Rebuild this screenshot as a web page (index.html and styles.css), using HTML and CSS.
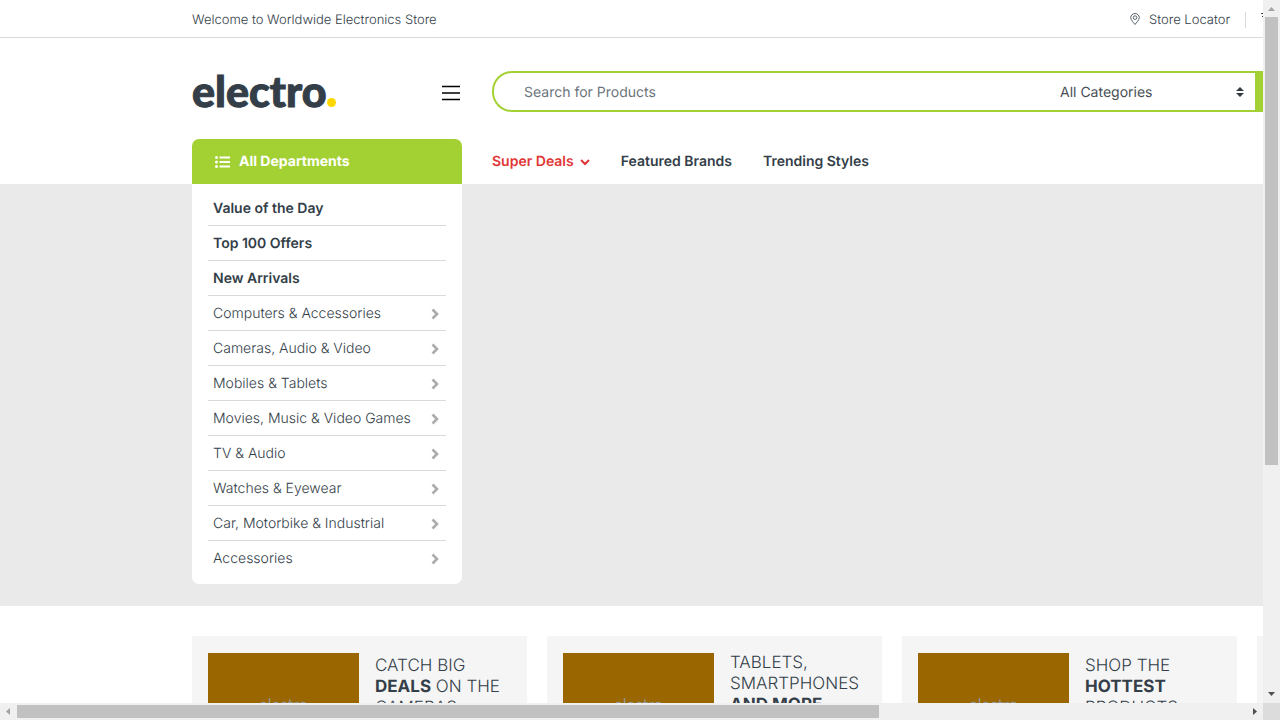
FILE: index.html
```html
<!DOCTYPE html>
<html lang="en">
<head>
<meta charset="utf-8">
<title>Electro</title>
<link rel="stylesheet" href="styles.css">
</head>
<body>
<svg class="defs" aria-hidden="true">
  <symbol id="chevron" viewBox="0 0 8 12"><path d="M1.500 1.500 6 6l-4.500 4.500" fill="none" stroke="currentColor" stroke-width="2.600"/></symbol>
</svg>
<div class="window">
  <div class="view">
    <div class="page">
      <div class="topbar">
        <div class="wrap topbar-row">
          <a class="top-link" href="#">Welcome to Worldwide Electronics Store</a>
          <nav class="top-nav" aria-label="Account">
            <a class="top-link locator" href="#">
              <svg class="pin" width="12" height="12" viewBox="0 0 12 12" fill="none" stroke="currentColor" stroke-width=".8" aria-hidden="true"><path d="M6 11.500C4.500 9.300 1.700 7 1.700 4.600a4.300 4.100 0 0 1 8.600 0C10.300 7 7.500 9.300 6 11.500z"/><circle cx="6" cy="4.600" r="1.800"/></svg>
              Store Locator</a>
            <span class="divider"></span>
            <a class="top-link" href="#" aria-label="Track your order">
              <svg width="16" height="12" viewBox="0 0 16 12" fill="none" stroke="currentColor" aria-hidden="true"><path d="M0 1.500h10v7H6M1 4.500h3M2 6.500h2M2 8.500h1M10 3.500h3l2 3v2h-2"/><circle cx="4.500" cy="9.500" r="1.500"/><circle cx="11.500" cy="9.500" r="1.500"/></svg>
            </a>
          </nav>
        </div>
      </div>
      <header class="wrap columns header">
        <div class="brand">
          <a class="logo" href="#">electro<span class="logo-dot"></span></a>
          <button class="burger" type="button" aria-label="Menu"><svg width="18" height="16" viewBox="0 0 18 16" aria-hidden="true"><path d="M0 1.500h18M0 8h18M0 14.500h18" stroke="#000" stroke-width="1.600"/></svg></button>
        </div>
        <form class="search">
          <input class="search-input" type="text" placeholder="Search for Products" aria-label="Search for Products">
          <div class="category">
            <select class="category-select" aria-label="Category"><option>All Categories</option></select>
            <svg class="category-arrows" width="8" height="10" viewBox="0 0 8 10" aria-hidden="true"><path d="M4 0l4 4H0zM4 10L0 6h8z" fill="#343a40"/></svg>
          </div>
          <button class="search-button" type="submit" aria-label="Search"></button>
        </form>
      </header>
      <div class="wrap columns navigation">
        <button class="departments" type="button">
          <svg class="list-icon" width="15" height="12" viewBox="0 0 15 12" fill="#fff" aria-hidden="true"><circle cx="1.500" cy="1.500" r="1.500"/><circle cx="1.500" cy="6" r="1.500"/><circle cx="1.500" cy="10.500" r="1.500"/><path d="M4.500.5H15v2H4.500zM4.500 5H15v2H4.500zM4.500 9.500H15v2H4.500z"/></svg>
          All Departments</button>
        <nav class="main-nav" aria-label="Main">
          <a class="nav-link hot" href="#">Super Deals
            <svg class="caret" width="10" height="7" viewBox="0 0 10 7" aria-hidden="true"><path d="M1 1l4 4 4-4" fill="none" stroke="currentColor" stroke-width="2"/></svg></a>
          <a class="nav-link" href="#">Featured Brands</a>
          <a class="nav-link" href="#">Trending Styles</a>
        </nav>
      </div>
      <section class="banner">
        <div class="wrap">
          <ul class="menu">
            <li><a class="menu-link strong" href="#">Value of the Day</a></li>
            <li><a class="menu-link strong" href="#">Top 100 Offers</a></li>
            <li><a class="menu-link strong" href="#">New Arrivals</a></li>
            <li><a class="menu-link" href="#">Computers &amp; Accessories<svg class="arrow"><use href="#chevron"/></svg></a></li>
            <li><a class="menu-link" href="#">Cameras, Audio &amp; Video<svg class="arrow"><use href="#chevron"/></svg></a></li>
            <li><a class="menu-link" href="#">Mobiles &amp; Tablets<svg class="arrow"><use href="#chevron"/></svg></a></li>
            <li><a class="menu-link" href="#">Movies, Music &amp; Video Games<svg class="arrow"><use href="#chevron"/></svg></a></li>
            <li><a class="menu-link" href="#">TV &amp; Audio<svg class="arrow"><use href="#chevron"/></svg></a></li>
            <li><a class="menu-link" href="#">Watches &amp; Eyewear<svg class="arrow"><use href="#chevron"/></svg></a></li>
            <li><a class="menu-link" href="#">Car, Motorbike &amp; Industrial<svg class="arrow"><use href="#chevron"/></svg></a></li>
            <li><a class="menu-link" href="#">Accessories<svg class="arrow"><use href="#chevron"/></svg></a></li>
          </ul>
        </div>
      </section>
      <section class="wrap cards">
        <a class="card" href="#"><div class="picture">electro</div><div class="card-text">CATCH BIG <b>DEALS</b> ON THE CAMERAS<div class="action"></div></div></a>
        <a class="card" href="#"><div class="picture">electro</div><div class="card-text">TABLETS, SMARTPHONES <b>AND MORE</b><div class="action tall"></div></div></a>
        <a class="card" href="#"><div class="picture">electro</div><div class="card-text">SHOP THE <b>HOTTEST</b> PRODUCTS<div class="action"></div></div></a>
        <div class="card"></div>
      </section>
    </div>
  </div>
  <div class="bar vertical" aria-hidden="true">
    <svg class="bar-end" viewBox="0 0 17 17"><path d="M5 11l3.500-4 3.500 4z" fill="#a3a3a3"/></svg>
    <div class="track"><div class="thumb"></div></div>
    <svg class="bar-end" viewBox="0 0 17 17"><path d="M5 6l3.500 4L12 6z" fill="#505050"/></svg>
  </div>
  <div class="bar" aria-hidden="true">
    <svg class="bar-end" viewBox="0 0 17 17"><path d="M10 5L6 8.500l4 3.500z" fill="#a3a3a3"/></svg>
    <div class="track"><div class="thumb"></div></div>
    <svg class="bar-end" viewBox="0 0 17 17"><path d="M7 5l4 3.500L7 12z" fill="#505050"/></svg>
  </div>
  <div class="corner"></div>
</div>
</body>
</html>
```
FILE: styles.css
```css
* { box-sizing: border-box; }
body {
  margin: 0;
  font-family: Inter, "Liberation Sans", sans-serif;
  font-size: 14px;
  color: #333e48;
  background: #fff;
  text-rendering: geometricPrecision;
}
a { color: inherit; text-decoration: none; }
button, input, select { font: inherit; color: inherit; border: 0; padding: 0; background: none; text-rendering: inherit; }
.defs { display: none; }

.window {
  display: grid;
  grid-template: minmax(0, 1fr) 17px / minmax(0, 1fr) 17px;
  height: 100vh;
}
.view { overflow: hidden; }
.page { min-width: 1800px; }
.wrap { padding: 0 192px; }
.columns { display: grid; grid-template-columns: 270px 1fr; gap: 30px; }

.topbar { border-bottom: 1px solid #dadada; font-size: 13px; font-weight: 300; }
.topbar-row { display: flex; justify-content: space-between; align-items: center; height: 37px; padding-top: 2px; }
.top-nav { display: flex; align-items: center; gap: 15px; flex: 0 0 479px; }
.locator { display: flex; align-items: center; gap: 8px; }
.pin { margin-bottom: 2px; }
.divider { width: 1px; height: 16px; background: #dadada; }

.header { padding-top: 33px; padding-bottom: 27px; }
.brand { display: flex; align-items: center; justify-content: space-between; }
.logo {
  display: flex;
  align-items: baseline;
  font-family: Lato, sans-serif;
  font-size: 43px;
  font-weight: 900;
  line-height: 41px;
  -webkit-text-stroke: 1px #333e48;
}
.logo-dot { width: 9px; height: 9px; border-radius: 50%; background: #fed700; }
.burger { display: flex; margin: 2px 2px 0 0; }

.search { display: flex; height: 41px; border: 2px solid #a3d133; border-right: 0; border-radius: 20px 0 0 20px; overflow: hidden; }
.search-input { flex: 0 0 536px; padding: 2px 0 0 30px; outline: 0; }
.search-input::placeholder { color: #6c757d; opacity: 1; }
.category { position: relative; flex: 0 0 225px; }
.category-select { appearance: none; width: 100%; height: 100%; padding: 2px 0 0 30px; color: #495057; }
.category-arrows { position: absolute; right: 11px; top: 14px; }
.search-button { flex: 1; background: #a3d133; }

.departments {
  display: flex;
  align-items: center;
  gap: 9px;
  height: 45px;
  padding-left: 23px;
  border-radius: 7px 7px 0 0;
  background: #a3d133;
  color: #fff;
  font-weight: 700;
}
.main-nav { display: flex; align-items: center; gap: 31px; font-weight: 600; }
.nav-link { display: flex; align-items: center; gap: 6px; }
.caret { margin-top: 2px; }
.hot { color: #df3737; }

.banner { padding-bottom: 22px; background: #eaeaea; }
.menu {
  width: 270px;
  margin: 0;
  padding: 7px 16px 8px;
  list-style: none;
  background: #fff;
  border-radius: 0 0 7px 7px;
}
.menu-link {
  display: flex;
  align-items: center;
  justify-content: space-between;
  height: 35px;
  padding: 0 7px 0 5px;
  border-bottom: 1px solid #dadada;
  font-weight: 300;
}
.menu li:last-child .menu-link { border-color: transparent; }
.strong { font-weight: 600; }
.arrow { width: 8px; height: 12px; margin-top: 2px; color: #acacac; }

.cards { display: grid; grid-template-columns: repeat(4, 335px); gap: 20px; padding-top: 30px; }
.card { display: flex; align-items: center; gap: 16px; padding: 17px 16px; background: #f5f5f5; }
.picture {
  display: grid;
  place-items: center;
  flex: 0 0 151px;
  height: 110px;
  padding-bottom: 8px;
  background: #960;
  color: #969696;
  font-family: Lato, sans-serif;
  font-size: 16px;
}
.card-text { font-size: 17px; line-height: 21px; font-weight: 300; }
.card-text b { font-weight: 700; }
.action { height: 41px; }
.tall { height: 47px; }

.bar { display: flex; background: #f0f0f0; }
.vertical { flex-direction: column; }
.bar-end { flex: 0 0 17px; width: 17px; height: 17px; }
.track { flex: 1; padding: 2px 0; }
.vertical .track { padding: 0 2px; }
.thumb { width: 70.1%; height: 100%; background: #c1c1c1; }
.vertical .thumb { width: 100%; height: 67%; }
.corner { background: #dcdcdc; }
```
